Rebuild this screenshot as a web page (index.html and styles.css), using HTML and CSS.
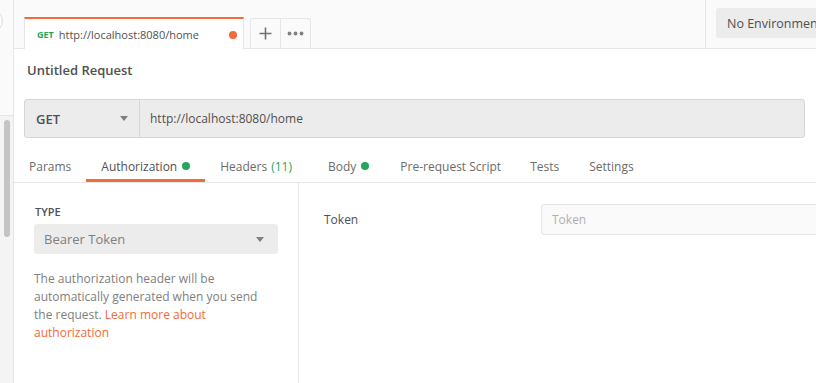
FILE: index.html
```html
<!DOCTYPE html>
<html>
<head>
<meta charset="utf-8">
<link rel="stylesheet" href="styles.css">
</head>
<body>
<div class="app">
  <div class="side">
    <div class="side-top"><div class="side-circle"></div></div>
    <div class="side-scroll"><div class="thumb"></div></div>
  </div>
  <div class="main">
    <div class="header">
      <div class="tabs">
        <div class="tab">
          <span class="tab-method">GET</span>
          <span class="tab-url">http://localhost:8080/home</span>
          <span class="tab-dot"></span>
        </div>
        <div class="tab-btn">
          <svg width="13" height="13" viewBox="0 0 13 13"><path d="M6.5 0.5v12M0.5 6.5h12" stroke="#707070" stroke-width="1.6" fill="none"/></svg>
        </div>
        <div class="tab-btn">
          <svg width="17" height="5" viewBox="0 0 17 5"><circle cx="2.5" cy="2.5" r="1.9" fill="#808080"/><circle cx="8.5" cy="2.5" r="1.9" fill="#808080"/><circle cx="14.5" cy="2.5" r="1.9" fill="#808080"/></svg>
        </div>
      </div>
      <div class="env">
        <div class="env-btn">No Environment</div>
      </div>
    </div>
    <div class="title">Untitled Request</div>
    <div class="urlbar">
      <div class="method">
        <span>GET</span>
        <span class="caret"></span>
      </div>
      <div class="url">http://localhost:8080/home</div>
    </div>
    <div class="reqtabs">
      <div class="rt">Params</div>
      <div class="rt active">Authorization<span class="gdot"></span></div>
      <div class="rt">Headers <span class="count">(11)</span></div>
      <div class="rt body">Body<span class="gdot"></span></div>
      <div class="rt pre">Pre-request Script</div>
      <div class="rt tests">Tests</div>
      <div class="rt">Settings</div>
    </div>
    <div class="auth">
      <div class="auth-left">
        <div class="type-label">TYPE</div>
        <div class="type-select">
          <span>Bearer Token</span>
          <span class="caret"></span>
        </div>
        <p class="desc">The authorization header will be automatically generated when you send the request. <a class="link">Learn more about authorization</a></p>
      </div>
      <div class="auth-right">
        <div class="field">
          <div class="field-label">Token</div>
          <div class="field-input">Token</div>
        </div>
      </div>
    </div>
  </div>
</div>
</body>
</html>
```
FILE: styles.css
```css
html, body {
  margin: 0;
  padding: 0;
  background: #ffffff;
}
body {
  font-family: "Open Sans", "Liberation Sans", sans-serif;
  font-size: 12px;
  color: #505050;
  width: 816px;
  height: 383px;
  overflow: hidden;
}
.app {
  display: flex;
  height: 383px;
}
.side {
  width: 13px;
  flex: none;
  border-right: 1px solid #e6e6e6;
  display: flex;
  flex-direction: column;
  overflow: hidden;
  background: #fafafa;
}
.side-top {
  height: 115px;
  border-bottom: 1px solid #e6e6e6;
  flex: none;
}
.side-circle {
  width: 22px;
  height: 22px;
  border: 1px solid #dcdcdc;
  border-radius: 50%;
  margin: 9px 0 0 -21px;
  background: #ffffff;
}
.side-scroll {
  flex: 1;
  padding: 4px 0 0 4px;
  background: #f4f4f4;
}
.thumb {
  width: 6px;
  height: 117px;
  border-radius: 3px;
  background: #c4c4c4;
}
.main {
  flex: 1;
  min-width: 0;
  display: flex;
  flex-direction: column;
}
.header {
  height: 48px;
  background: #fafafa;
  border-bottom: 1px solid #e6e6e6;
  display: flex;
  flex: none;
}
.tabs {
  flex: 0 0 681px;
  padding-left: 10px;
  display: flex;
  align-items: flex-end;
}
.tab {
  background: #ffffff;
  border-top: 2px solid #f26b3a;
  border-left: 1px solid #e6e6e6;
  border-right: 1px solid #e6e6e6;
  margin-bottom: -1px;
  display: flex;
  align-items: center;
  padding: 1px 0 0 12px;
  box-sizing: content-box;
  width: 206px;
  height: 29px;
}
.tab-method {
  color: #26a65b;
  font-size: 9px;
  font-weight: 700;
  margin-right: 5px;
}
.tab-url {
  font-size: 11px;
  color: #505050;
  flex: 1;
}
.tab-dot {
  width: 8px;
  height: 8px;
  border-radius: 50%;
  background: #f26b3a;
  margin-right: 6px;
}
.tab-btn {
  width: 29px;
  height: 29px;
  border: 1px solid #e6e6e6;
  border-bottom: none;
  display: flex;
  align-items: center;
  justify-content: center;
  background: #fafafa;
}
.tab-btn:nth-child(2) {
  margin-left: 6px;
  border-radius: 3px 0 0 0;
}
.tab-btn:nth-child(3) {
  border-left: none;
  border-radius: 0 3px 0 0;
}
.env {
  flex: none;
  width: 250px;
  border-left: 1px solid #e6e6e6;
  padding: 8px 0 0 10px;
}
.env-btn {
  height: 30px;
  background: #ececec;
  border-radius: 3px;
  padding-left: 11px;
  line-height: 31px;
  font-size: 12.5px;
  color: #505050;
}
.title {
  font-size: 13px;
  font-weight: 600;
  color: #505050;
  padding: 12px 13px 0 13px;
  height: 38px;
  line-height: 18px;
  flex: none;
}
.urlbar {
  margin: 0 11px 0 10px;
  height: 37px;
  border: 1px solid #d6d6d6;
  border-radius: 3px;
  background: #ececec;
  display: flex;
  flex: none;
}
.method {
  width: 103px;
  padding: 0 0 0 11px;
  border-right: 1px solid #d6d6d6;
  display: flex;
  align-items: center;
  font-size: 13px;
  font-weight: 600;
  color: #505050;
}
.method span:first-child {
  flex: 1;
}
.caret {
  width: 0;
  height: 0;
  border-left: 4px solid transparent;
  border-right: 4px solid transparent;
  border-top: 5px solid #808080;
  margin-right: 11px;
}
.url {
  padding-left: 10px;
  display: flex;
  align-items: center;
  font-size: 12px;
  color: #505050;
}
.reqtabs {
  display: flex;
  height: 28px;
  margin-top: 16px;
  border-bottom: 1px solid #e6e6e6;
  flex: none;
}
.rt {
  padding: 0 15px 4px 15px;
  display: flex;
  align-items: center;
  color: #6b6b6b;
  font-size: 12px;
  box-sizing: border-box;
  height: 28px;
}
.rt.active {
  color: #505050;
  border-bottom: 3px solid #f26b3a;
  padding-bottom: 1px;
}
.rt.body {
  margin-left: 6px;
}
.rt.pre {
  margin-left: 1px;
}
.rt.tests {
  margin-left: -1px;
}
.count {
  color: #26a65b;
  margin-left: 4px;
}
.gdot {
  width: 8px;
  height: 8px;
  border-radius: 50%;
  background: #26a65b;
  margin-left: 5px;
}
.auth {
  display: flex;
  flex: 1;
}
.auth-left {
  width: 244px;
  flex: none;
  padding: 22px 20px 0 20px;
  border-right: 1px solid #e6e6e6;
}
.type-label {
  font-size: 11px;
  font-weight: 600;
  color: #505050;
  line-height: 14px;
  margin-left: 1px;
}
.type-select {
  margin-top: 5px;
  height: 30px;
  background: #ececec;
  border-radius: 3px;
  display: flex;
  align-items: center;
  padding-left: 10px;
  font-size: 13px;
  color: #808080;
}
.type-select span:first-child {
  flex: 1;
}
.type-select .caret {
  margin-right: 14px;
}
.desc {
  margin: 16px 0 0 0;
  font-size: 12px;
  line-height: 18px;
  color: #808080;
}
.link {
  color: #f26b3a;
}
.auth-right {
  flex: 1;
  padding: 21px 0 0 25px;
}
.field {
  display: flex;
  align-items: center;
}
.field-label {
  width: 217px;
  flex: none;
  font-size: 12px;
  color: #505050;
}
.field-input {
  width: 400px;
  flex: none;
  height: 29px;
  border: 1px solid #e6e6e6;
  border-radius: 3px;
  background: #fafafa;
  padding-left: 10px;
  display: flex;
  align-items: center;
  font-size: 12px;
  color: #b0b0b0;
}
```
